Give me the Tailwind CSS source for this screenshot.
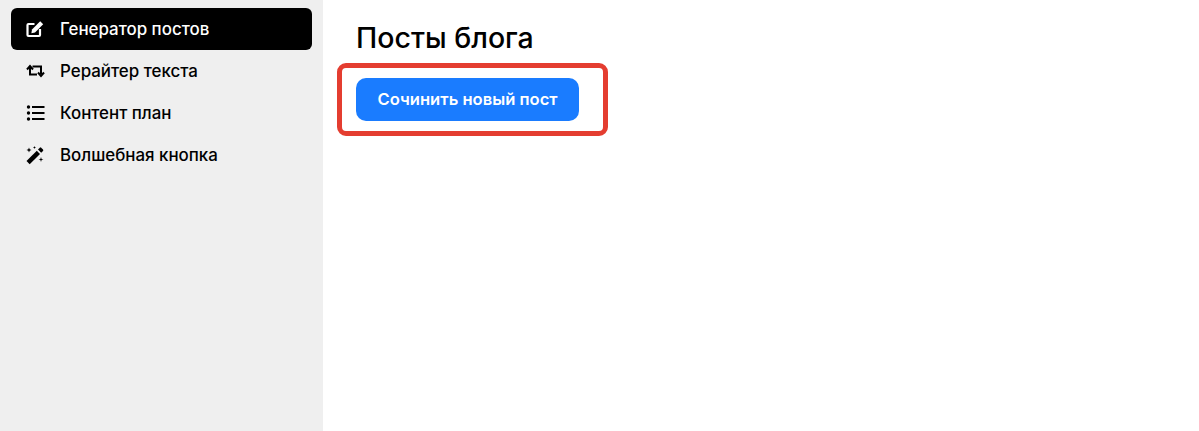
<!DOCTYPE html>
<html lang="ru">
<head>
<meta charset="utf-8">
<script src="https://cdn.jsdelivr.net/npm/@tailwindcss/browser@4"></script>
</head>
<body class="bg-white">
<div class="flex h-[431px] w-[1199px] overflow-hidden font-['Inter',sans-serif] text-black">
  <aside class="flex w-[323px] shrink-0 flex-col bg-[#efefef] pt-2 pr-[11px] pl-[11px]">
    <a class="flex h-[42px] items-center gap-[15px] rounded-md bg-black pl-[14px] text-white">
      <svg class="h-[20px] w-[20px] shrink-0" viewBox="0 0 20 20" fill="none" stroke="currentColor">
        <path d="M9.5 5H3.5a1 1 0 0 0-1 1v10a1 1 0 0 0 1 1h10.5a1 1 0 0 0 1-1v-6" stroke-width="2.2"/>
        <path d="M7 10.5 15.2 2.3l3 3L10 13.5l-3.6.7z" fill="currentColor" stroke="none"/>
      </svg>
      <span class="text-[16.9px] leading-none font-medium">Генератор постов</span>
    </a>
    <a class="flex h-[42px] items-center gap-[15px] rounded-md pl-[14px]">
      <svg class="h-[20px] w-[20px] shrink-0" viewBox="0 0 20 20" fill="none" stroke="currentColor" stroke-width="2">
        <path d="M5 6v7.5h7"/>
        <path d="M7.5 5.5H16V13"/>
        <path d="M2 8.5 5 5l3 3.5M13 11.5l3 3.5 3-3.5"/>
      </svg>
      <span class="text-[16.9px] leading-none font-medium">Рерайтер текста</span>
    </a>
    <a class="flex h-[42px] items-center gap-[15px] rounded-md pl-[14px]">
      <svg class="h-[20px] w-[20px] shrink-0" viewBox="0 0 20 20" fill="currentColor">
        <circle cx="3.5" cy="4" r="1.7"/><circle cx="3.5" cy="10" r="1.7"/><circle cx="3.5" cy="16" r="1.7"/>
        <rect x="7" y="3" width="12.5" height="2"/><rect x="7" y="9" width="12.5" height="2"/><rect x="7" y="15" width="12.5" height="2"/>
      </svg>
      <span class="text-[16.9px] leading-none font-medium">Контент план</span>
    </a>
    <a class="flex h-[42px] items-center gap-[15px] rounded-md pl-[14px]">
      <svg class="h-[20px] w-[20px] shrink-0" viewBox="0 0 20 20" fill="currentColor">
        <path d="M1.5 16 11.8 5.7l3.2 3.2L4.7 19.2z"/>
        <path d="M13 4.5 14.8 2.7a1 1 0 0 1 1.4 0l1.8 1.8a1 1 0 0 1 0 1.4L16.2 7.7z"/>
        <path d="M4 2.5l.7 1.8 1.8.7-1.8.7L4 7.5l-.7-1.8-1.8-.7 1.8-.7zM9.5 1l.4 1.1 1.1.4-1.1.4-.4 1.1-.4-1.1L8 2.5l1.1-.4zM16 12l.6 1.9 1.9.6-1.9.6-.6 1.9-.6-1.9-1.9-.6 1.9-.6z"/>
      </svg>
      <span class="text-[16.9px] leading-none font-medium">Волшебная кнопка</span>
    </a>
  </aside>
  <main class="flex flex-col items-start pt-[21px] pl-[14px]">
    <h1 class="ml-[19px] text-[28.5px] leading-[34px] font-medium">Посты блога</h1>
    <div class="mt-[8px] h-[73px] w-[271px] rounded-[9px] border-[5px] border-[#e43d30] pt-[10px] pl-[14px]">
      <button class="h-[43px] w-[223px] rounded-[10px] bg-[#1a7cff] text-[16.6px] font-semibold text-white">Сочинить новый пост</button>
    </div>
  </main>
</div>
</body>
</html>
